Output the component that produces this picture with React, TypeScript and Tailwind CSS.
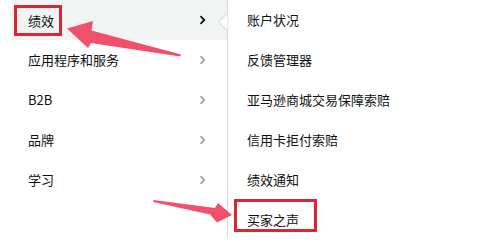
import React from "react";

const left = ["绩效", "应用程序和服务", "B2B", "品牌", "学习"];
const right = ["账户状况", "反馈管理器", "亚马逊商城交易保障索赔", "信用卡拒付索赔", "绩效通知", "买家之声"];

function Chevron({ dark }: { dark: boolean }) {
  return (
    <svg width="7" height="10" viewBox="0 0 7 10" className="shrink-0">
      <path d="M1.5 1.2 L5.3 5 L1.5 8.8" fill="none" stroke={dark ? "#0f1111" : "#8a8f8f"} strokeWidth={dark ? 1.8 : 1.3} />
    </svg>
  );
}

export default function App() {
  return (
    <div
      className="relative w-[489px] h-[245px] bg-white overflow-hidden text-[13px] text-[#0f1111]"
      style={{ fontFamily: '"Noto Sans CJK SC", "Noto Sans", sans-serif' }}
    >
      <div className="flex">
        <div className="w-[227px] pl-[12px] h-[237px]">
          {left.map((t, i) => (
            <div
              key={t}
              className={`flex items-center justify-between h-[40px] pl-[16px] pr-[21px] ${i === 0 ? "bg-[#f2f4f4]" : ""}`}
            >
              <span className={i === 0 ? "pt-[2px]" : ""}>{t}</span>
              <Chevron dark={i === 0} />
            </div>
          ))}
        </div>
        <div className="w-px h-[237px] bg-[#d5d9d9]" />
        <div className="pl-[19px]">
          {right.map((t) => (
            <div key={t} className="flex items-center h-[40px]">
              {t}
            </div>
          ))}
        </div>
      </div>

      {/* notch */}
      <svg className="absolute left-[214px] top-[8px]" width="16" height="28" viewBox="0 0 16 28">
        <defs>
          <filter id="sh" x="-50%" y="-50%" width="200%" height="200%">
            <feGaussianBlur stdDeviation="1.2" />
          </filter>
        </defs>
        <path d="M5 14 L13.5 5.5 L13.5 22.5 Z" fill="#c8cccc" filter="url(#sh)" />
        <path d="M5.5 14 L13.5 6 L13.5 22 Z" fill="#ffffff" />
      </svg>

      {/* red boxes */}
      <div className="absolute left-[14px] top-[5px] w-[48px] h-[31px] border-[3px] border-[#d92632]" />
      <div className="absolute left-[234px] top-[199px] w-[83px] h-[33px] border-[3px] border-[#d92632]" />

      {/* arrows */}
      <svg className="absolute left-0 top-0" width="489" height="245" viewBox="0 0 489 245">
        <path
          d="M67 28.5 L93 21 L91.5 30.5 L181 54.5 L180 56.5 L91 43 L88 48 Z"
          fill="#f2506a"
        />
        <path
          d="M232 215 L217 222.5 L210 214.5 L153 202 L153.5 200 L215 208 L218 203 Z"
          fill="#f2506a"
        />
      </svg>
    </div>
  );
}
